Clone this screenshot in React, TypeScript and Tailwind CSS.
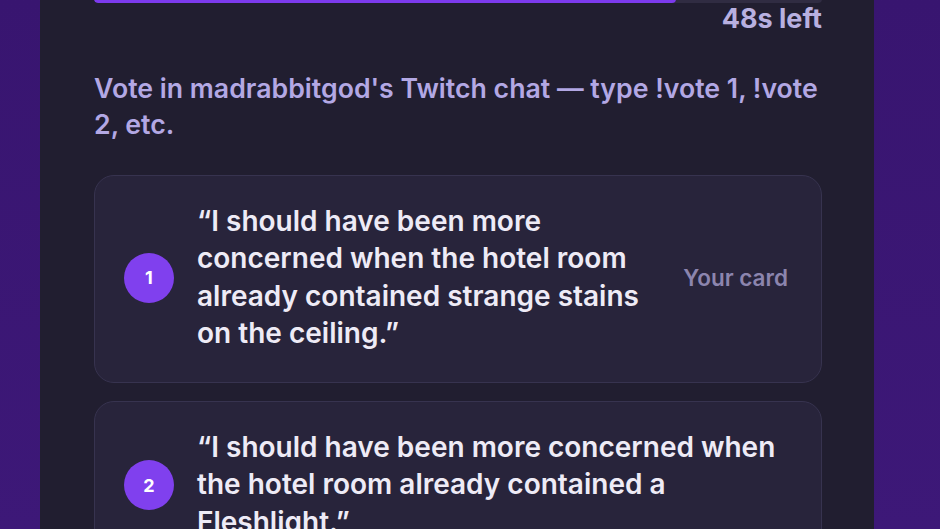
const cards = [
  {
    n: 1,
    text: '“I should have been more concerned when the hotel room already contained strange stains on the ceiling.”',
    mine: true,
  },
  {
    n: 2,
    text: '“I should have been more concerned when the hotel room already contained a Fleshlight.”',
    mine: false,
  },
];

export default function App() {
  const progress = 80;

  return (
    <div className="h-[529px] w-full overflow-hidden bg-gradient-to-b from-[#381570] to-[#3d1878] font-['Inter',sans-serif]">
      <div className="ml-[40px] h-full w-[834px] overflow-hidden bg-[#211e30] pl-[54px] pr-[52px]">
        {/* Timer bar */}
        <div className="-mt-[5px] h-2 w-full overflow-hidden rounded-full bg-[#302c42]">
          <div className="h-full rounded-full bg-[#7c3aed]" style={{width: `${progress}%`}} />
        </div>
        <div className="mt-[1px] text-right text-[27px] font-bold leading-[30px] text-[#b8b0e0]">48s left</div>

        <p className="mt-[36px] text-[26.7px] font-semibold leading-[36px] text-[#b3a8e4]">
          Vote in madrabbitgod's Twitch chat — type !vote 1, !vote 2, etc.
        </p>

        <div className="mt-[33px] flex flex-col gap-[18px]">
          {cards.map((card) => (
            <div
              key={card.n}
              className="flex items-center rounded-[20px] border border-[#37334f] bg-[#28243b] pt-[27px] pb-[30px] pl-[29px] pr-[33px]"
            >
              <div className="mr-[23px] flex h-[50px] w-[50px] shrink-0 items-center justify-center rounded-full bg-[#8040ee] text-[18px] font-bold text-white">
                {card.n}
              </div>
              <div
                className={`flex-1 text-[28px] font-semibold leading-[37.3px] text-[#eeebf6] ${
                  card.mine ? 'max-w-[470px]' : ''
                }`}
              >
                {card.text}
              </div>
              {card.mine && (
                <div className="ml-auto shrink-0 text-[22.5px] font-semibold text-[#8c85ae]">Your card</div>
              )}
            </div>
          ))}
        </div>
      </div>
    </div>
  );
}
